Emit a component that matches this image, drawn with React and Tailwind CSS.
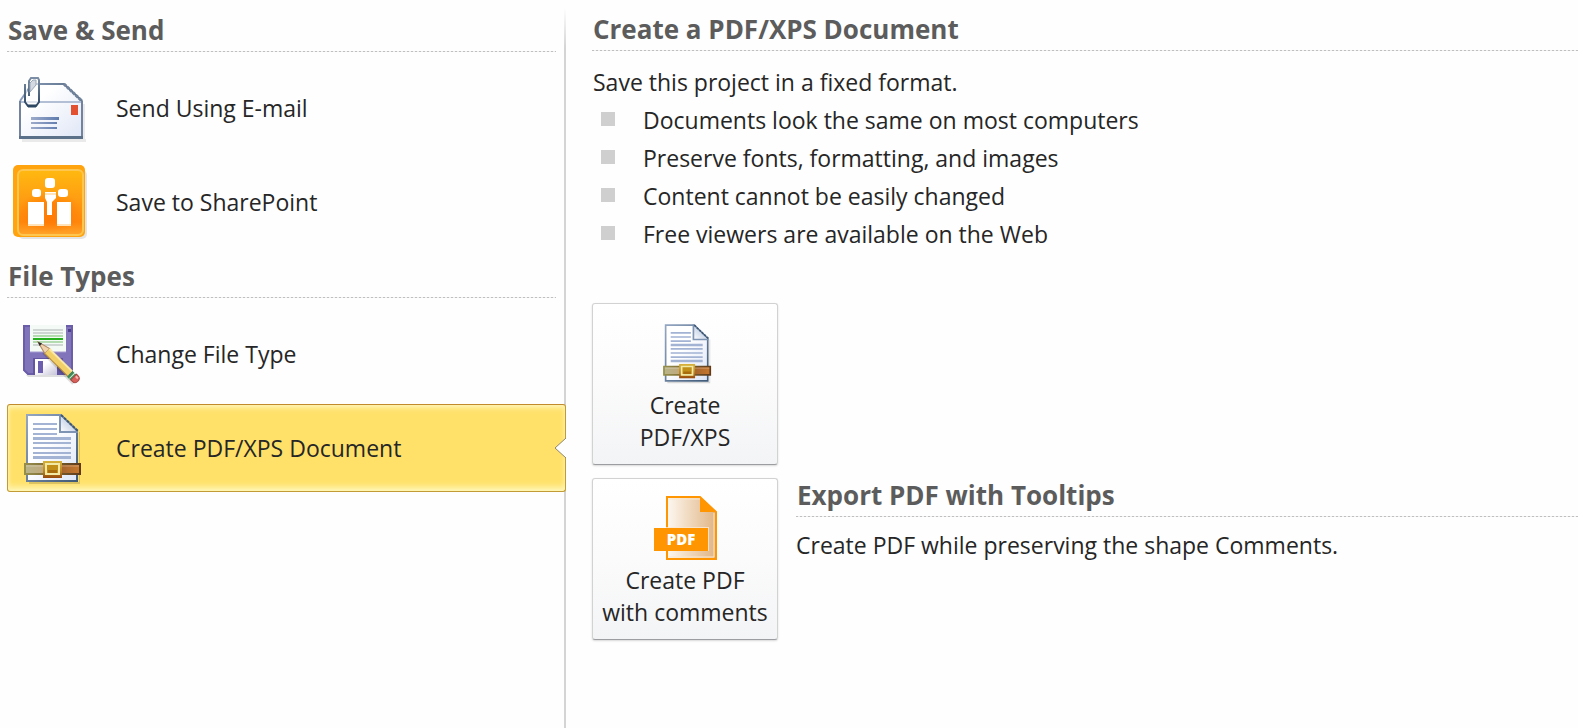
import React, { useState } from 'react';

const SHARE_ITEMS = [
  { id: 'email', label: 'Send Using E-mail', Icon: MailIcon },
  { id: 'sharepoint', label: 'Save to SharePoint', Icon: SharePointIcon },
];

const FILE_ITEMS = [
  { id: 'change', label: 'Change File Type', Icon: FloppyIcon },
  { id: 'pdf', label: 'Create PDF/XPS Document', Icon: DocumentIcon },
];

const BENEFITS = [
  'Documents look the same on most computers',
  'Preserve fonts, formatting, and images',
  'Content cannot be easily changed',
  'Free viewers are available on the Web',
];

function MailIcon({ className }) {
  return (
    <svg viewBox="0 0 76 76" className={className} aria-hidden="true">
      <defs>
        <linearGradient id="mailBody" x1="0" y1="0" x2="1" y2="1">
          <stop offset="0.3" stopColor="#ffffff" />
          <stop offset="1" stopColor="#dfe6f6" />
        </linearGradient>
        <linearGradient id="mailLine" x1="0" x2="1">
          <stop offset="0" stopColor="#9dabcb" />
          <stop offset="1" stopColor="#5f7bae" />
        </linearGradient>
        <linearGradient id="mailEdge" x1="0" x2="1">
          <stop offset="0" stopColor="#8b9dbb" />
          <stop offset="1" stopColor="#5b6e86" />
        </linearGradient>
        <linearGradient id="clip" x1="0" y1="0" x2="0" y2="1">
          <stop offset="0" stopColor="#7c8ea5" />
          <stop offset="1" stopColor="#2d4763" />
        </linearGradient>
      </defs>
      <path d="M10 69h64v3H10zM71 34h2v37h-2z" fill="#000" opacity="0.08" />
      <path d="M8 31 19 14h33l18 17v37H8z" fill="url(#mailBody)" />
      <path d="M8 31 20 14h32l18 17" fill="none" stroke="url(#mailEdge)" strokeWidth="2" />
      <path d="M52 14 70 31" stroke="#72849d" strokeWidth="3" strokeDasharray="3 1" />
      <path d="M9 32h60" stroke="#b3bfd5" strokeWidth="2" />
      <path d="M7 31h2v37H7zM69 31h2v37h-2z" fill="#71839f" />
      <path d="M7 66h64v3H7z" fill="#5b7089" />
      <path d="M59 35h7v10h-7z" fill="#e2502f" />
      <path d="M19 47h28v3H19zM19 52h26v2H19zM19 57h26v2H19z" fill="url(#mailLine)" />
      <path d="M17 26V11l2-3h7l1 2v22l-3 4h-8l-3-4V14" fill="#fff" fillOpacity="0.6" stroke="url(#clip)" strokeWidth="2" />
      <path d="M18 22V13l3-3h3v5z" fill="#d5dae1" stroke="#9aa7b8" strokeWidth="1" />
      <path d="M16 36h8" stroke="#2d4763" strokeWidth="3" />
    </svg>
  );
}

function SharePointIcon({ className }) {
  return (
    <svg viewBox="0 0 76 76" className={className} aria-hidden="true">
      <defs>
        <linearGradient id="spFill" x1="0" y1="0" x2="0" y2="1">
          <stop offset="0" stopColor="#ffb910" />
          <stop offset="0.45" stopColor="#ff9d12" />
          <stop offset="0.8" stopColor="#ff850b" />
          <stop offset="1" stopColor="#ffa62b" />
        </linearGradient>
        <radialGradient id="spGlow">
          <stop offset="0.4" stopColor="#ff7300" stopOpacity="0.6" />
          <stop offset="1" stopColor="#ff7300" stopOpacity="0" />
        </radialGradient>
      </defs>
      <rect x="6" y="6" width="69" height="69" rx="5" fill="#000" opacity="0.1" />
      <rect x="1" y="1" width="72" height="72" rx="5" fill="#ffa30f" />
      <rect x="6" y="6" width="65" height="65" rx="5" fill="url(#spFill)" stroke="#ffc64f" strokeWidth="2" />
      <ellipse cx="38" cy="48" rx="32" ry="21" fill="url(#spGlow)" />
      <g fill="#fff">
        <rect x="33" y="14" width="10" height="10" rx="3" />
        <rect x="20" y="25" width="9" height="8" rx="3" />
        <rect x="46" y="25" width="10" height="8" rx="3" />
        <path d="M33 28h11v6l-4 4v13h-5V38l-2-4z" />
        <rect x="16" y="38" width="16" height="24" />
        <rect x="45" y="38" width="14" height="24" />
      </g>
      <path d="M33 30h11M16 61h16M45 61h14" stroke="#ffe3bb" strokeWidth="2" />
    </svg>
  );
}

function FloppyIcon({ className }) {
  return (
    <svg viewBox="0 0 76 76" className={className} aria-hidden="true">
      <defs>
        <linearGradient id="shutter" x1="0" y1="0" x2="1" y2="1">
          <stop offset="0.4" stopColor="#ffffff" />
          <stop offset="1" stopColor="#c5c2d8" />
        </linearGradient>
      </defs>
      <path d="M14 59h47v2H16z" fill="#000" opacity="0.12" />
      <path d="M11 9h50v50H16l-5-5z" fill="#8174bb" />
      <path d="M12 10h48v48H16l-4-4z" fill="none" stroke="#6b5da8" strokeWidth="2" />
      <path d="M18 9h36v27H18z" fill="#f4faf6" />
      <path d="M18 36h36" stroke="#a69cd0" strokeWidth="1" />
      <path d="M21 14h30M21 17h30M21 29h30" stroke="#aab3b3" strokeWidth="1" />
      <path d="M21 20h30M21 26h30" stroke="#72bd6b" strokeWidth="1" />
      <path d="M21 23h30" stroke="#26b01f" strokeWidth="2" />
      <path d="M56 13h3v3h-3z" fill="#4d3f8c" />
      <path d="M21 42h30v17H21z" fill="#6455a2" />
      <path d="M23 43h22v16H23z" fill="url(#shutter)" />
      <path d="M26 45h5v12h-5z" fill="#6c5dae" />
      <path d="M32 36 62 67" stroke="#000" strokeWidth="5" opacity="0.12" />
      <g transform="translate(26 26) rotate(44.5)">
        <path d="M0 0 13-3.5v7z" fill="#f1d3ae" stroke="#b08a62" strokeWidth="1" />
        <path d="M0 0 4-1.8v3.6z" fill="#2d2d2d" />
        <path d="M13-3.5h32v7H13z" fill="#f2cf67" />
        <path d="M13-3h32" stroke="#fae9a6" strokeWidth="2" />
        <path d="M13 3.5h32" stroke="#b68a35" strokeWidth="1" />
        <path d="M45-3.5h5v8h-5z" fill="#3f8a55" />
        <path d="M48-4v8" stroke="#dff0e2" strokeWidth="1" />
        <path d="M50-4h2q4 0 4 4t-4 4h-2z" fill="#d9605a" stroke="#a8443f" strokeWidth="1" />
        <path d="M51-2h3" stroke="#f5b5ae" strokeWidth="2" />
      </g>
    </svg>
  );
}

function DocumentIcon({ className }) {
  return (
    <svg viewBox="0 0 76 76" className={className} aria-hidden="true">
      <defs>
        <linearGradient id="docPaper" x1="0" y1="0" x2="1" y2="1">
          <stop offset="0.4" stopColor="#ffffff" />
          <stop offset="1" stopColor="#dde6f7" />
        </linearGradient>
        <linearGradient id="docEdge" x1="0" y1="0" x2="1" y2="1">
          <stop offset="0" stopColor="#94a6c2" />
          <stop offset="1" stopColor="#3f5a78" />
        </linearGradient>
        <linearGradient id="docFold" x1="0" y1="1" x2="1" y2="0">
          <stop offset="0" stopColor="#ffffff" />
          <stop offset="1" stopColor="#9fb4d6" />
        </linearGradient>
        <linearGradient id="belt" x1="0" x2="1">
          <stop offset="0" stopColor="#b8b489" />
          <stop offset="0.35" stopColor="#c0a87c" />
          <stop offset="0.65" stopColor="#a3642f" />
          <stop offset="1" stopColor="#c8782b" />
        </linearGradient>
        <linearGradient id="beltEdge" gradientUnits="userSpaceOnUse" x1="12" y1="0" x2="69" y2="0">
          <stop offset="0" stopColor="#97904c" />
          <stop offset="1" stopColor="#5f3a1a" />
        </linearGradient>
        <linearGradient id="buckle" x1="0" y1="0" x2="0" y2="1">
          <stop offset="0" stopColor="#d6b23a" />
          <stop offset="0.6" stopColor="#bd8420" />
          <stop offset="1" stopColor="#96480a" />
        </linearGradient>
      </defs>
      <path d="M17 72h50V22h1v52H17z" fill="#000" opacity="0.14" />
      <path d="M15 5h34l16 16v50H15z" fill="url(#docPaper)" stroke="url(#docEdge)" strokeWidth="2" />
      <path d="M48 5v17h17z" fill="url(#docFold)" />
      <path d="M48 4v18h18" fill="none" stroke="#7f93b2" strokeWidth="2" />
      <path d="M49 5 66 21" stroke="#3f5875" strokeWidth="2" strokeDasharray="3 1" />
      <path
        d="M21 13h24v2H21zM21 18h24v2H21zM21 23h24v2H21zM21 27h38v3H21zM21 32h38v2H21zM21 37h38v2H21zM21 42h38v2H21zM21 46h38v3H21z"
        fill="#a3b3d3"
      />
      <path d="M13 54h55v10H13z" fill="url(#belt)" stroke="url(#beltEdge)" strokeWidth="2" />
      <path d="M14 56h53" stroke="#fff" strokeWidth="1" opacity="0.3" />
      <path d="M31 51h19v17H31z" fill="url(#buckle)" />
      <path d="M34 54h13v10H34z" fill="#c18f18" stroke="#f1e9a4" strokeWidth="2" />
      <path d="M36 60h9v3h-9z" fill="#a96c0d" />
    </svg>
  );
}

function PdfIcon({ className }) {
  return (
    <svg viewBox="0 0 64 64" className={className} aria-hidden="true">
      <defs>
        <linearGradient id="pdfPaper" x1="0" x2="1">
          <stop offset="0" stopColor="#fdf8f1" />
          <stop offset="1" stopColor="#e0b483" />
        </linearGradient>
      </defs>
      <path d="M14 1h33l16 15v47H14z" fill="url(#pdfPaper)" stroke="#ff9500" strokeWidth="2" />
      <path d="M16 3h31M61 17v44M16 61h45" stroke="#fbe7cc" strokeWidth="1" fill="none" />
      <path d="M47 1 63 16H47z" fill="#ff9500" />
      <path d="M13 31h43v24H13z" fill="#fbe9d2" opacity="0.8" />
      <path d="M1 32h54v23H1z" fill="#ff9500" />
      <text x="28" y="49" textAnchor="middle" fontSize="15" fontWeight="800" fill="#fff" fontFamily="Open Sans, sans-serif">
        PDF
      </text>
    </svg>
  );
}

function SectionHeading({ children }) {
  return (
    <div>
      <h2 className="pl-px text-[26px] leading-[34px] font-bold text-[#5c5c5c]">{children}</h2>
      <div className="mt-1 h-px bg-[repeating-linear-gradient(to_right,#bfbfbf_0_2px,#f0f0f0_2px_4px)]" />
    </div>
  );
}

function NavItem({ item, selected, onSelect }) {
  const { label, Icon } = item;
  const look = selected
    ? 'border-[#c29a36] border-t-[#c18b2d] bg-[#ffe16a] shadow-[inset_0_5px_5px_-2px_#fff3b0,inset_0_-6px_6px_-2px_#fff6b8,inset_0_0_3px_1px_#ffeb94]'
    : 'border-transparent';

  return (
    <button
      type="button"
      aria-pressed={selected}
      onClick={() => onSelect(item.id)}
      className={`relative z-10 flex h-[88px] items-center gap-7 rounded-[3px] border pl-1 text-left text-[23px] leading-8 ${look}`}
    >
      <Icon className="size-[76px] shrink-0" />
      <span>{label}</span>
      {selected && (
        <svg viewBox="0 0 12 20" className="absolute -right-px top-[33px] h-5 w-3" aria-hidden="true">
          <path d="M12 0 1 10l11 10z" fill="#fefefe" />
          <path d="M12 0 1 10l11 10" fill="none" stroke="#8f866b" strokeWidth="1" />
        </svg>
      )}
    </button>
  );
}

function NavGroup({ title, items, active, onSelect }) {
  return (
    <section>
      <div className="pr-2">
        <SectionHeading>{title}</SectionHeading>
      </div>
      <div className="mt-3 -mr-0.5 flex flex-col gap-1.5">
        {items.map((item) => (
          <NavItem key={item.id} item={item} selected={active === item.id} onSelect={onSelect} />
        ))}
      </div>
    </section>
  );
}

function ActionButton({ Icon, lines }) {
  return (
    <button
      type="button"
      className="flex h-[162px] w-[186px] shrink-0 flex-col items-center gap-1 rounded-[3px] border border-[#d2d2d2] border-b-[#9b9da0] bg-linear-to-b from-white via-[#fbfbfb] to-[#f3f4f6] pt-[17px] text-[23px] leading-8 shadow-[0_1px_2px_#d8d8d8]"
    >
      <Icon className="size-16" />
      <span>
        {lines[0]}
        <br />
        {lines[1]}
      </span>
    </button>
  );
}

export default function App() {
  const [active, setActive] = useState('pdf');

  return (
    <div className="flex min-h-screen bg-[#fefefe] font-['Open_Sans','Noto_Sans',sans-serif] text-[23px] leading-8 text-[#262626]">
      <nav className="flex w-[564px] shrink-0 flex-col gap-[13px] pt-[13px] pl-[7px]">
        <NavGroup title="Save & Send" items={SHARE_ITEMS} active={active} onSelect={setActive} />
        <NavGroup title="File Types" items={FILE_ITEMS} active={active} onSelect={setActive} />
      </nav>
      <div className="mt-2 w-0.5 shrink-0 bg-[linear-gradient(to_bottom,transparent,#d4d4d4_40px)]" />

      <main className="min-w-0 flex-1 pt-3 pl-[26px]">
        <SectionHeading>Create a PDF/XPS Document</SectionHeading>
        <p className="mt-[15px] pl-px">Save this project in a fixed format.</p>
        <ul className="mt-1.5 flex flex-col gap-1.5">
          {BENEFITS.map((text) => (
            <li key={text} className="flex items-center gap-7 pl-[9px]">
              <span className="mb-0.5 size-3.5 bg-[#cfcfcf]" />
              {text}
            </li>
          ))}
        </ul>

        <div className="mt-[53px] flex flex-col gap-[13px]">
          <ActionButton Icon={DocumentIcon} lines={['Create', 'PDF/XPS']} />
          <div className="flex gap-[18px]">
            <ActionButton Icon={PdfIcon} lines={['Create PDF', 'with comments']} />
            <section className="min-w-0 flex-1">
              <SectionHeading>Export PDF with Tooltips</SectionHeading>
              <p className="mt-3">Create PDF while preserving the shape Comments.</p>
            </section>
          </div>
        </div>
      </main>
    </div>
  );
}
